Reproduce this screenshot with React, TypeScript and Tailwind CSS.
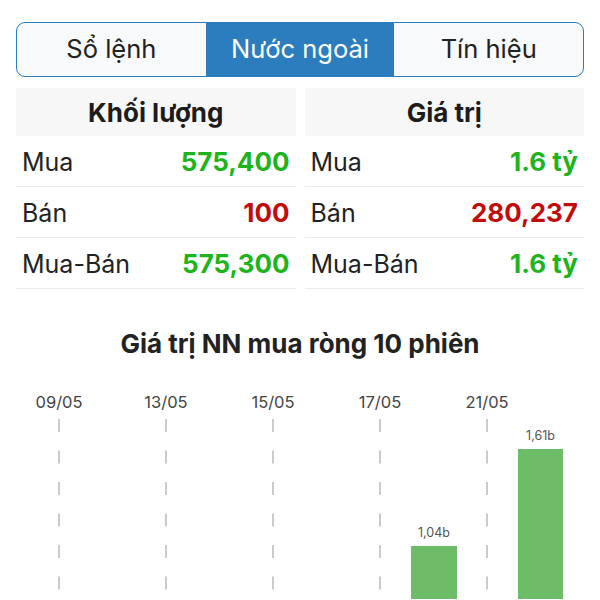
const TABS = ['Sổ lệnh', 'Nước ngoài', 'Tín hiệu'];

type Row = { label: string; value: string; up: boolean };

const VOLUME: Row[] = [
  { label: 'Mua', value: '575,400', up: true },
  { label: 'Bán', value: '100', up: false },
  { label: 'Mua-Bán', value: '575,300', up: true },
];
const VALUE: Row[] = [
  { label: 'Mua', value: '1.6 tỷ', up: true },
  { label: 'Bán', value: '280,237', up: false },
  { label: 'Mua-Bán', value: '1.6 tỷ', up: true },
];

const DATES = [
  { x: 59, d: '09/05' },
  { x: 166, d: '13/05' },
  { x: 273, d: '15/05' },
  { x: 380, d: '17/05' },
  { x: 487, d: '21/05' },
];

const BARS = [
  { x: 411, w: 46, top: 157, label: '1,04b' },
  { x: 518, w: 45, top: 60, label: '1,61b' },
];

function Column({ title, rows }: { title: string; rows: Row[] }) {
  return (
    <div className="flex flex-col">
      <div className="h-[48px] bg-[#f7f7f7] flex items-center justify-center text-[26px] font-bold text-[#1c1c1c]">
        {title}
      </div>
      {rows.map((r) => (
        <div key={r.label} className="h-[51px] flex items-baseline justify-between px-[6px] pt-[13px] border-b border-[#ececec] leading-[26px]">
          <span className="text-[25px] text-[#222]">{r.label}</span>
          <span className={`text-[26px] font-bold ${r.up ? 'text-[#1db41d]' : 'text-[#c20c0c]'}`}>{r.value}</span>
        </div>
      ))}
    </div>
  );
}

function Chart() {
  return (
    <svg width="600" height="210" className="block">
      {DATES.map((t) => (
        <g key={t.d}>
          <text x={t.x} y={19} textAnchor="middle" fontSize="16.5" fill="#444">
            {t.d}
          </text>
          <line x1={t.x} x2={t.x} y1={30} y2={210} stroke="#b0b0b0" strokeWidth="1.3" strokeDasharray="13 18.5" />
        </g>
      ))}
      {BARS.map((b) => (
        <g key={b.label}>
          <rect x={b.x} y={b.top} width={b.w} height={210 - b.top} fill="#6cbc68" />
          <text x={b.x + b.w / 2} y={b.top - 9} textAnchor="middle" fontSize="12.5" fill="#555">
            {b.label}
          </text>
        </g>
      ))}
    </svg>
  );
}

export default function App() {
  return (
    <div className="w-[600px] h-[600px] overflow-hidden bg-white" style={{ fontFamily: 'Inter, "Noto Sans", sans-serif' }}>
      <div className="px-4 pt-[22px]">
        <div className="h-[55px] flex rounded-[9px] border-[1.5px] border-[#2b7dbd] overflow-hidden bg-[#f8f9fa]">
          {TABS.map((t, i) => (
            <div
              key={t}
              className={`flex-1 flex items-center justify-center text-[25.5px] ${
                i === 1 ? 'bg-[#2b7dbd] text-white' : 'text-[#222]'
              }`}
            >
              {t}
            </div>
          ))}
        </div>

        <div className="mt-[11px] grid grid-cols-2 gap-[9px]">
          <Column title="Khối lượng" rows={VOLUME} />
          <Column title="Giá trị" rows={VALUE} />
        </div>
      </div>

      <h2 className="mt-[40px] h-[30px] text-center text-[26px] font-bold text-[#222] leading-[30px]">
        Giá trị NN mua ròng 10 phiên
      </h2>

      <div className="mt-[30px]">
        <Chart />
      </div>
    </div>
  );
}
